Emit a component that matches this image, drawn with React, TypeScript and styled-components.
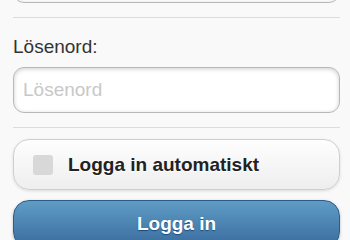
import React from "react";
import styled, { createGlobalStyle } from "styled-components";

const Global = createGlobalStyle`
  html, body {
    margin: 0;
    padding: 0;
    background: #f9f9f9;
    font-family: "Liberation Sans", Arial, Helvetica, sans-serif;
  }
`;

const Page = styled.div`
  height: 240px;
  overflow: hidden;
  background: #f9f9f9;
  padding: 0 10px 0 13px;
`;

const Form = styled.form`
  margin-top: -61px;
  display: flex;
  flex-direction: column;
`;

const Field = styled.div`
  display: flex;
  flex-direction: column;
  padding: 18px 0 14px;
  border-bottom: 1px solid #dcdcdc;
`;

const Label = styled.label`
  font-size: 19px;
  line-height: 20px;
  color: #333;
  margin: 1px 0 10px;
`;

const Input = styled.input`
  box-sizing: border-box;
  height: 46px;
  width: 100%;
  margin: 0;
  padding: 0 9px;
  font-family: inherit;
  font-size: 19px;
  color: #333;
  background: #fff;
  border: 1px solid #b8b8b8;
  border-radius: 11px;
  box-shadow: inset 0 1px 4px rgba(0, 0, 0, 0.2);
  outline: none;
  &::placeholder {
    color: #c8c8c8;
  }
`;

const CheckRow = styled.label`
  box-sizing: border-box;
  margin-top: 11px;
  height: 51px;
  display: flex;
  align-items: center;
  gap: 15px;
  padding-left: 19px;
  border: 1px solid #cfcfcf;
  border-radius: 16px;
  background: linear-gradient(#fefefe, #eeeeee);
  box-shadow: 0 1px 3px rgba(0, 0, 0, 0.12);
  font-size: 19px;
  font-weight: bold;
  color: #222;
  text-shadow: 0 1px 0 #fff;
`;

const Box = styled.span`
  width: 20px;
  height: 20px;
  border-radius: 3px;
  background: #d8d8d8;
`;

const Submit = styled.button`
  box-sizing: border-box;
  margin-top: 10px;
  height: 48px;
  width: 100%;
  border: 1px solid #2c5b85;
  border-radius: 16px;
  background: linear-gradient(#5f9cc5, #396b9e);
  box-shadow: 0 1px 3px rgba(0, 0, 0, 0.25);
  color: #fff;
  font-family: inherit;
  font-size: 19px;
  font-weight: bold;
  text-shadow: 0 1px 1px #194b7e;
  padding: 0;
`;

export default function App() {
  return (
    <Page>
      <Global />
      <Form>
        <Field>
          <Input aria-label="Användarnamn" />
        </Field>
        <Field>
          <Label>Lösenord:</Label>
          <Input type="password" placeholder="Lösenord" />
        </Field>
        <CheckRow>
          <Box />
          <span>Logga in automatiskt</span>
        </CheckRow>
        <Submit type="button">Logga in</Submit>
      </Form>
    </Page>
  );
}
